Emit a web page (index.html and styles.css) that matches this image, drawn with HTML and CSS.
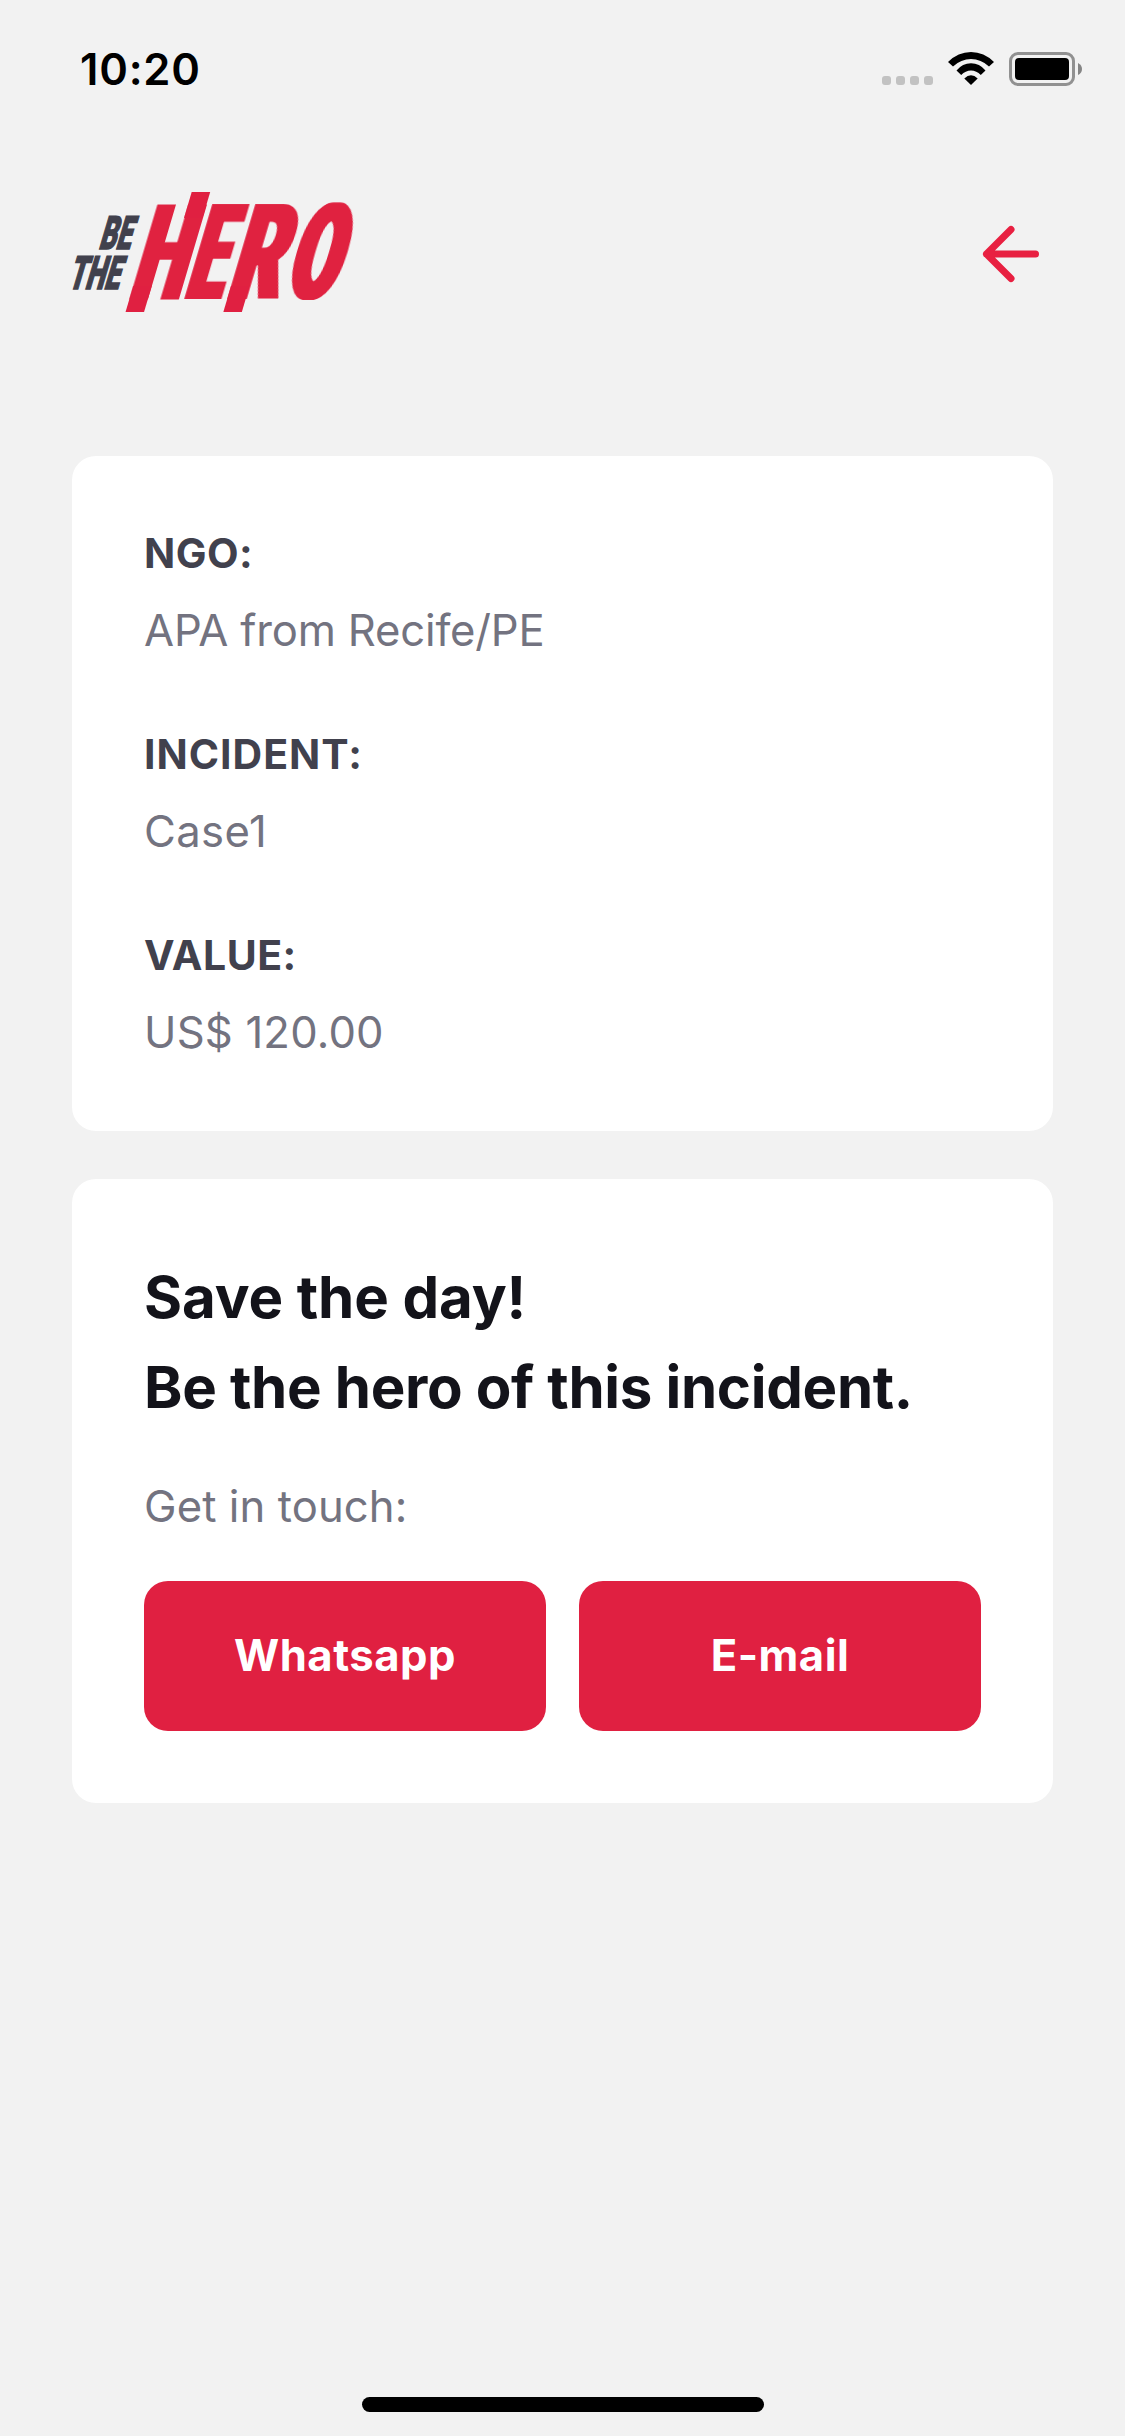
FILE: index.html
```html
<!DOCTYPE html>
<html lang="en">
<head>
<meta charset="utf-8">
<title>Be The Hero</title>
<link rel="stylesheet" href="styles.css">
</head>
<body>
<div class="screen">
  <div class="status">
    <span class="time">10:20</span>
    <div class="indicators">
      <div class="dots"><i></i><i></i><i></i><i></i></div>
      <svg class="wifi" viewBox="0 0 46 33">
        <path d="M0 10Q10 0 23 0T46 10L41 14.5Q33 7 23 7T5 14.5Z"/>
        <path d="M8.500 18.500Q14.500 11.300 23 11.300T37.500 18.500L32.800 23Q28.500 18.500 23 18.500T13.200 23Z"/>
        <path d="M16.300 26.500Q23 20 29.700 26.500L23 33Z"/>
      </svg>
      <div class="battery"><div class="cell"><b></b></div><svg class="nub" viewBox="0 0 4 12"><path d="M0 0Q4 2 4 6T0 12Z"/></svg></div>
    </div>
  </div>
  <header class="header">
    <svg class="logo" viewBox="0 0 285 120">
      <defs><filter id="widen" x="-5%" y="-5%" width="110%" height="110%"><feMorphology operator="dilate" radius="3 0"/></filter></defs>
      <g class="small">
        <text transform="translate(26 56.500) skewX(-16.500) scale(.56 1)" textLength="57" lengthAdjust="spacingAndGlyphs">BE</text>
        <text transform="translate(-4.700 96.500) skewX(-16.500) scale(.56 1)" textLength="91" lengthAdjust="spacingAndGlyphs">THE</text>
      </g>
      <g class="big" transform="translate(0 107) skewX(-16.500)">
        <g filter="url(#widen)">
          <text transform="translate(56.500 0) scale(.55 1)">H</text>
          <text transform="translate(111.800 0) scale(.48 1)">E</text>
          <text transform="translate(154 0) scale(.59 1)">R</text>
          <text transform="translate(211.500 0) scale(.54 1)">O</text>
        </g>
        <rect x="57.400" y="-13" width="18.500" height="26"/>
        <rect x="88" y="-107" width="18.500" height="26"/>
        <rect x="155.200" y="-13" width="18.500" height="26"/>
      </g>
    </svg>
    <svg class="back" viewBox="0 0 24 24"><path d="M19 12H5M12 19L5 12L12 5"/></svg>
  </header>
  <main class="cards">
    <section class="card">
      <div class="field"><h3 class="ngo">NGO:</h3><p class="name">APA from Recife/PE</p></div>
      <div class="field"><h3>INCIDENT:</h3><p class="case">Case1</p></div>
      <div class="field"><h3 class="ngo">VALUE:</h3><p class="amount">US$ 120.00</p></div>
    </section>
    <section class="card">
      <h2><span class="lead">Save the day!</span><br>Be the hero of this incident.</h2>
      <p class="touch">Get in touch:</p>
      <div class="actions"><button>Whatsapp</button><button>E-mail</button></div>
    </section>
  </main>
  <div class="home"></div>
</div>
</body>
</html>
```
FILE: styles.css
```css
* { box-sizing: border-box; margin: 0; padding: 0; }
body { background: #f2f2f2; font-family: Inter, "Liberation Sans", sans-serif; }
.screen { width: 1125px; height: 2436px; display: flex; flex-direction: column; }
.status { height: 132px; padding: 42px 43px 0 80px; display: flex; justify-content: space-between; align-items: flex-start; }
.time { font-size: 43.5px; font-weight: 600; line-height: 54px; letter-spacing: .8px; color: #000; }
.indicators { display: flex; align-items: flex-end; padding-top: 10px; }
.dots { display: flex; gap: 5px; margin: 0 15px 1px 0; }
.dots i { width: 9px; height: 9px; border-radius: 3px; background: #c2c2c2; }
.wifi { width: 46px; height: 33px; margin: 0 15px 1px 0; }
.battery { display: flex; align-items: center; gap: 3px; }
.cell { width: 66px; height: 34px; border: 3px solid #919191; border-radius: 9px; padding: 3px; }
.cell b { display: block; height: 22px; border-radius: 4px; background: #000; }
.nub { width: 4px; height: 12px; fill: #858585; }
.header { height: 180px; padding: 60px 72px 0; display: flex; justify-content: space-between; align-items: center; }
.logo { width: 285px; height: 120px; overflow: visible; }
.small, .big { font-family: Roboto, sans-serif; font-weight: 900; stroke-linejoin: miter; }
.small { fill: #41414d; stroke: #41414d; stroke-width: 1.6px; font-size: 46px; }
.big { fill: #e02041; font-size: 133px; }
.back { width: 84px; height: 84px; margin-top: 3px; fill: none; stroke: #e82041; stroke-width: 2; stroke-linecap: round; stroke-linejoin: round; }
.cards { padding: 144px 72px 0; display: flex; flex-direction: column; gap: 48px; }
.card { background: #fff; border-radius: 24px; padding: 72px; }
.field + .field { margin-top: 71px; }
.field:last-child { margin-bottom: -1px; }
.field h3 { font-size: 41px; line-height: 50px; font-weight: 700; letter-spacing: 1px; color: #41414d; }
.field .ngo { letter-spacing: .5px; }
.field p, .touch { font-size: 43.6px; line-height: 54px; color: #737380; }
.field p { margin-top: 26px; }
.name { letter-spacing: -.18px; }
.case { letter-spacing: .4px; }
.amount { letter-spacing: .2px; }
.card h2 { padding-top: 1px; font-size: 58.2px; line-height: 90px; font-weight: 700; letter-spacing: -.33px; color: #13131a; }
.lead { letter-spacing: -.1px; }
.touch { margin-top: 48px; letter-spacing: .1px; }
.actions { margin-top: 47px; display: flex; gap: 33px; }
.actions button { flex: 1; height: 150px; padding-bottom: 2px; border: 0; border-radius: 24px; background: #e02041; color: #fff; font: 700 43.6px Inter, sans-serif; letter-spacing: .5px; }
.home { width: 402px; height: 15px; border-radius: 8px; background: #000; margin: auto auto 24px 362px; }
```
